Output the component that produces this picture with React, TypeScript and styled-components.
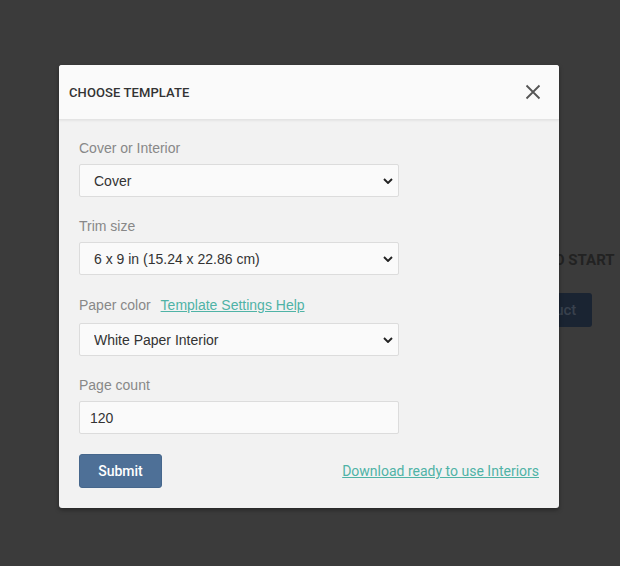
import styled, { createGlobalStyle } from "styled-components";

const GlobalStyle = createGlobalStyle`
    html, body {
        margin: 0;
        padding: 0;
        background: #3b3b3b;
        font-family: "Liberation Sans", Arial, sans-serif;
    }
    * {
        box-sizing: border-box;
    }
`;

const Page = styled.div`
    width: 620px;
    height: 566px;
    position: relative;
    overflow: hidden;
    background: #3b3b3b;
    display: flex;
    justify-content: flex-end;
`;

const BackdropContent = styled.div`
    display: flex;
    flex-direction: column;
    align-items: center;
    gap: 24px;
    padding-top: 251px;
    margin-right: -12px;
    width: 190px;
    flex-shrink: 0;
`;

const BackdropTitle = styled.div`
    font-family: Roboto, sans-serif;
    font-size: 15px;
    font-weight: 700;
    color: #222;
    white-space: nowrap;
`;

const BackdropButton = styled.div`
    background: #1a2432;
    color: #38414d;
    font-family: Roboto, sans-serif;
    font-size: 15px;
    font-weight: 500;
    padding: 8px 16px;
    border-radius: 3px;
    white-space: nowrap;
    margin-right: 22px;
`;

const Modal = styled.div`
    position: absolute;
    left: 59px;
    top: 65px;
    width: 500px;
    background: #f2f2f2;
    border-radius: 3px;
    box-shadow: 0 2px 4px rgba(0, 0, 0, 0.35);
    overflow: hidden;
`;

const Header = styled.div`
    height: 55px;
    display: flex;
    align-items: center;
    justify-content: space-between;
    padding: 0 16px 0 10px;
    background: #fafafa;
    border-bottom: 1px solid #e4e4e4;
    box-shadow: 0 1px 2px rgba(0, 0, 0, 0.06);
`;

const Title = styled.h2`
    margin: 0;
    font-family: Roboto, sans-serif;
    font-size: 13px;
    font-weight: 500;
    color: #333;
    letter-spacing: 0.1px;
`;

const CloseButton = styled.button`
    border: none;
    background: transparent;
    padding: 0;
    width: 20px;
    height: 20px;
    display: flex;
    align-items: center;
    justify-content: center;
    cursor: pointer;
`;

const Body = styled.div`
    padding: 18px 20px 20px 20px;
    display: flex;
    flex-direction: column;
`;

const Field = styled.div<{ $gap?: number; $top?: number }>`
    display: flex;
    flex-direction: column;
    gap: ${(p) => p.$gap ?? 6}px;
    margin-top: ${(p) => p.$top ?? 0}px;
    margin-bottom: 19px;
`;

const LabelRow = styled.div`
    display: flex;
    align-items: center;
    gap: 10px;
    height: 20px;
`;

const Label = styled.label`
    font-size: 14px;
    color: #888;
`;

const HelpLink = styled.a`
    font-size: 14px;
    color: #4fb3a6;
    text-decoration: underline;
    cursor: pointer;
`;

const SelectWrap = styled.div`
    position: relative;
    width: 320px;
`;

const Select = styled.select`
    appearance: none;
    width: 320px;
    height: 33px;
    padding: 0 28px 0 14px;
    background: #fafafa;
    border: 1px solid #dcdcdc;
    border-radius: 2px;
    font-family: "Liberation Sans", Arial, sans-serif;
    font-size: 14px;
    color: #333;
    outline: none;
`;

const Chevron = styled.svg`
    position: absolute;
    right: 6px;
    top: 14px;
    pointer-events: none;
`;

const Input = styled.input`
    width: 320px;
    height: 33px;
    padding: 0 10px;
    background: #fafafa;
    border: 1px solid #dcdcdc;
    border-radius: 2px;
    font-family: "Liberation Sans", Arial, sans-serif;
    font-size: 14px;
    color: #333;
    outline: none;
`;

const Footer = styled.div`
    display: flex;
    align-items: center;
    justify-content: space-between;
    margin-top: 1px;
`;

const SubmitButton = styled.button`
    width: 83px;
    height: 34px;
    background: #4e7097;
    color: #fff;
    border: 1px solid #46678c;
    border-radius: 3px;
    font-family: Roboto, sans-serif;
    font-size: 14px;
    font-weight: 500;
    cursor: pointer;
`;

const DownloadLink = styled.a`
    font-family: Roboto, sans-serif;
    font-size: 14px;
    color: #4fb3a6;
    text-decoration: underline;
    cursor: pointer;
`;

const SelectField = ({ value, options }: { value: string; options: string[] }) => (
    <SelectWrap>
        <Select defaultValue={value}>
            {options.map((o) => (
                <option key={o} value={o}>{o}</option>
            ))}
        </Select>
        <Chevron width="10" height="6" viewBox="0 0 10 6">
            <path d="M1 1 L5 5 L9 1" fill="none" stroke="#222" strokeWidth="1.9" />
        </Chevron>
    </SelectWrap>
);

const App = () => {
    return (
        <>
            <GlobalStyle />
            <Page>
                <BackdropContent>
                    <BackdropTitle>CLICK HERE TO START</BackdropTitle>
                    <BackdropButton>Create Product</BackdropButton>
                </BackdropContent>

                <Modal>
                    <Header>
                        <Title>CHOOSE TEMPLATE</Title>
                        <CloseButton aria-label="Close">
                            <svg width="16" height="16" viewBox="0 0 16 16">
                                <path d="M1.5 1.5 L14.5 14.5 M14.5 1.5 L1.5 14.5" stroke="#555" strokeWidth="1.8" fill="none" />
                            </svg>
                        </CloseButton>
                    </Header>

                    <Body>
                        <Field>
                            <LabelRow><Label>Cover or Interior</Label></LabelRow>
                            <SelectField value="Cover" options={["Cover", "Interior"]} />
                        </Field>

                        <Field>
                            <LabelRow><Label>Trim size</Label></LabelRow>
                            <SelectField
                                value="6 x 9 in (15.24 x 22.86 cm)"
                                options={["5 x 8 in (12.7 x 20.32 cm)", "6 x 9 in (15.24 x 22.86 cm)", "8.5 x 11 in (21.59 x 27.94 cm)"]}
                            />
                        </Field>

                        <Field $gap={8} $top={1}>
                            <LabelRow>
                                <Label>Paper color</Label>
                                <HelpLink>Template Settings Help</HelpLink>
                            </LabelRow>
                            <SelectField value="White Paper Interior" options={["White Paper Interior", "Cream Paper Interior"]} />
                        </Field>

                        <Field>
                            <LabelRow><Label>Page count</Label></LabelRow>
                            <Input defaultValue="120" />
                        </Field>

                        <Footer>
                            <SubmitButton>Submit</SubmitButton>
                            <DownloadLink>Download ready to use Interiors</DownloadLink>
                        </Footer>
                    </Body>
                </Modal>
            </Page>
        </>
    );
};

export default App;
